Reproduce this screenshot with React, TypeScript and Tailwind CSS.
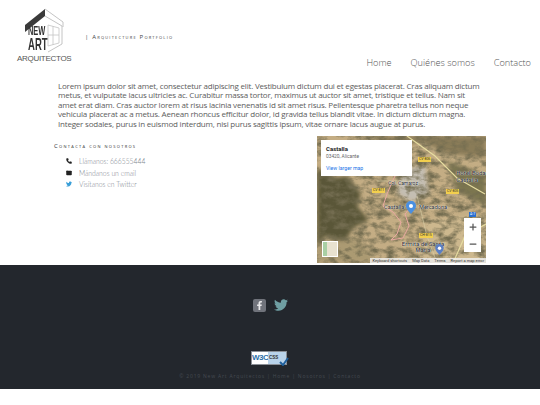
import { Phone, Mail, Plus, Minus } from 'lucide-react';
import { FaFacebookF, FaTwitter } from 'react-icons/fa';

const bodyLines = [
  'Lorem ipsum dolor sit amet, consectetur adipiscing elit. Vestibulum dictum dui et egestas placerat. Cras aliquam dictum',
  'metus, et vulputate lacus ultricies ac. Curabitur massa tortor, maximus ut auctor sit amet, tristique et tellus. Nam sit',
  'amet erat diam. Cras auctor lorem at risus lacinia venenatis id sit amet risus. Pellentesque pharetra tellus non neque',
  'vehicula placerat ac a metus. Aenean rhoncus efficitur dolor, id gravida tellus blandit vitae. In dictum dictum magna.',
  'Integer sodales, purus in euismod interdum, nisi purus sagittis ipsum, vitae ornare lacus augue at purus.',
];

function Logo() {
  return (
    <div className="relative h-[64px] w-[56px]">
      <svg viewBox="0 0 56 64" className="absolute left-0 top-0 h-[64px] w-[56px]">
        <path d="M8 17 L28 1 L28 8 L8 24 Z" fill="#3a3a3a" />
        <path d="M28 1 L46 14 L46 19 M28 8 L45 18 L45 36 L31 44" fill="none" stroke="#b5b5b5" strokeWidth="0.8" />
        <path d="M31 17 L42 20 L42 35 L31 38 Z M36 18 L36 37 M31 27 L42 27" fill="none" stroke="#c4c4c4" strokeWidth="0.8" />
      </svg>
      <div className="absolute left-[11px] top-[18px] origin-left scale-x-[0.62] font-['Liberation_Sans',sans-serif] text-[12px] font-bold leading-[11px] text-[#333]">NEW</div>
      <div className="absolute left-[11px] top-[29px] origin-left scale-x-[0.56] font-['Liberation_Sans',sans-serif] text-[17px] font-bold leading-[15px] text-[#333]">ART</div>
      <div className="absolute left-0 top-[45px] font-['Liberation_Sans',sans-serif] text-[8px] leading-[11px] tracking-[-0.3px] text-[#555]">ARQUITECTOS</div>
    </div>
  );
}

function MapEmbed() {
  const roadLabel = 'absolute bg-[#f2cf4e] px-[1px] text-[3.5px] leading-[5px] text-[#333]';
  const placeLabel = 'absolute text-[#222] [text-shadow:0_0_1px_#fff,0_0_1px_#fff]';
  return (
    <div className="relative h-[127px] w-[169px] overflow-hidden bg-[#9a8d72] font-['Roboto',sans-serif]">
      <svg viewBox="0 0 169 127" className="absolute inset-0 h-full w-full">
        <defs>
          <filter id="grain" x="0" y="0" width="100%" height="100%">
            <feTurbulence type="fractalNoise" baseFrequency="0.1 0.16" numOctaves="5" seed="23" />
            <feColorMatrix values="0 0 0 0 0.17  0 0 0 0 0.15  0 0 0 0 0.08  2.4 0 0 0 -0.9" />
          </filter>
          <filter id="soft" x="-10%" y="-10%" width="120%" height="120%">
            <feGaussianBlur stdDeviation="2" />
          </filter>
        </defs>
        <rect width="169" height="127" fill="#c4ad84" />
        <g filter="url(#soft)">
          <path d="M0 32 L18 42 L30 40 L44 58 L40 70 L52 84 L36 92 L28 106 L8 100 L0 112 Z" fill="#5a5638" />
          <path d="M55 0 L169 0 L169 22 L130 18 L105 6 L70 12 Z" fill="#8a7c58" />
          <path d="M130 25 L169 40 L169 70 L140 55 Z" fill="#7c7650" />
          <path d="M84 35 L108 28 L112 58 L95 66 L80 58 Z" fill="#c4beb2" />
          <path d="M110 85 L169 78 L169 127 L105 127 Z" fill="#cdb88e" />
          <path d="M0 112 L40 100 L60 127 L0 127 Z" fill="#ab9a72" />
        </g>
        <rect width="169" height="127" filter="url(#grain)" />
        <path d="M76 44 L80 36 L92 22 M76 44 L70 58 L66 70 L76 76 L84 86 L80 98 L74 104 L86 102 L92 90 L88 78 L98 66" fill="none" stroke="#e8a8a0" strokeWidth="1" />
        <path d="M90 0 L118 20 L140 42 L168 58 M169 88 L148 100 L136 127" fill="none" stroke="#e6dca0" strokeWidth="1.2" />
        <path d="M100 60 L110 100 L120 127 M60 45 L96 45" fill="none" stroke="#d8d0a8" strokeWidth="0.6" />
      </svg>
      <div className="absolute left-[4px] top-[4px] h-[36px] w-[91px] bg-white px-[5px] pt-[5px]">
        <div className="text-[6px] font-bold leading-[7px] text-[#222]">Castalla</div>
        <div className="mt-[2px] text-[4.8px] leading-[6px] text-[#666]">03420, Alicante</div>
        <div className="mt-[5px] text-[5.2px] leading-[6px] text-[#1a73e8]">View larger map</div>
      </div>
      <span className={`${roadLabel} left-[101px] top-[21px]`}>CV-806</span>
      <span className={`${roadLabel} left-[55px] top-[52px]`}>CV-811</span>
      <span className={`${roadLabel} left-[129px] top-[53px]`}>CV-805</span>
      <span className={`${roadLabel} left-[102px] top-[97px]`}>CH-815</span>
      <span className="absolute left-[152px] top-[76px] bg-[#2a6fd0] px-[1px] text-[3.5px] leading-[5px] text-white">A-7</span>
      <span className={`${placeLabel} left-[71px] top-[44px] text-[5px] leading-[6px]`}>Col. Camaroz</span>
      <span className={`${placeLabel} left-[67px] top-[68px] text-[5.6px] leading-[7px]`}>Castalla</span>
      <span className={`${placeLabel} left-[102px] top-[68px] text-[5.6px] leading-[7px]`}>Mercadona</span>
      <span className={`${placeLabel} left-[139px] top-[33px] w-[32px] text-[6px] leading-[7px]`}>Hotel Boda Castalla</span>
      <span className={`${placeLabel} left-[78px] top-[105px] w-[56px] text-center text-[6px] leading-[6px]`}>Ermita de Santa Maria</span>
      <svg viewBox="0 0 10 13" className="absolute left-[89px] top-[65px] h-[13px] w-[10px]">
        <path d="M5 0 C2 0 0 2 0 5 C0 8 3 10 5 13 C7 10 10 8 10 5 C10 2 8 0 5 0 Z" fill="#4a8fe0" />
        <circle cx="5" cy="5" r="2" fill="#fff" />
      </svg>
      <svg viewBox="0 0 10 13" className="absolute left-[118px] top-[108px] h-[11px] w-[9px]">
        <path d="M5 0 C2 0 0 2 0 5 C0 8 3 10 5 13 C7 10 10 8 10 5 C10 2 8 0 5 0 Z" fill="#5b7fc4" />
        <circle cx="5" cy="5" r="2" fill="#fff" />
      </svg>
      <div className="absolute left-[147px] top-[82px] flex w-[17px] flex-col items-center bg-white text-[#555]">
        <div className="flex h-[17px] items-center justify-center"><Plus size={10} strokeWidth={3} /></div>
        <div className="flex h-[17px] items-center justify-center"><Minus size={10} strokeWidth={3} /></div>
      </div>
      <div className="absolute bottom-[6px] left-[5px] h-[16px] w-[16px] border border-white bg-[#e8e2d0]">
        <div className="h-full w-[4px] bg-[#a9cfa4]" />
      </div>
      <div className="absolute bottom-0 right-0 flex gap-[5px] bg-[#f2f2f2cc] px-[2px] text-[4px] leading-[5px] text-[#333]">
        <span>Keyboard shortcuts</span>
        <span>Map Data</span>
        <span>Terms</span>
        <span>Report a map error</span>
      </div>
    </div>
  );
}

export default function App() {
  return (
    <div className="h-[405px] w-[540px] overflow-hidden bg-white font-['Open_Sans',sans-serif]">
      <header className="flex h-[76px] items-start pl-[17px] pr-[9px] pt-[8px]">
        <Logo />
        <div className="ml-[12px] mt-[25px] flex-1 text-[6px] leading-[8px] tracking-[1.2px] text-[#444] [font-variant:small-caps]">
          | Arquitecture Portfolio
        </div>
        <nav className="mt-[48px] flex gap-[19px] text-[9.2px] font-light leading-[14px] text-[#555]">
          <span>Home</span>
          <span>Quiénes somos</span>
          <span>Contacto</span>
        </nav>
      </header>

      <main className="h-[189px] px-[58px] pt-[5px]">
        <div className="whitespace-nowrap text-[8px] leading-[9.4px] tracking-[-0.2px] text-[#5c5c5c]">
          {bodyLines.map((line) => (
            <p key={line}>{line}</p>
          ))}
        </div>
        <div className="mt-[8px] flex justify-between">
          <div className="-ml-[4px] pt-[6px]">
            <h4 className="text-[6px] leading-[8px] tracking-[1.3px] text-[#333] [font-variant:small-caps]">Contacta con nosotros</h4>
            <ul className="mt-[6px] flex flex-col gap-[1.7px] pl-[12px] font-['Lato',sans-serif] text-[6.8px] font-light leading-[10px] text-[#7d848d]">
              <li className="flex items-center gap-[7px]">
                <Phone size={6} className="fill-[#222] text-[#222]" />
                <span>Llámanos: 666555444</span>
              </li>
              <li className="flex items-center gap-[7px]">
                <Mail size={6} className="fill-[#222] text-[#222]" />
                <span>Mándanos un email</span>
              </li>
              <li className="flex items-center gap-[7px]">
                <FaTwitter size={6} className="text-[#3a9fd8]" />
                <span>Visítanos en Twitter</span>
              </li>
            </ul>
          </div>
          <div className="-mr-[4px]">
            <MapEmbed />
          </div>
        </div>
      </main>

      <footer className="flex h-[124px] flex-col items-center bg-[#23272d]">
        <div className="mt-[33px] flex items-center gap-[8px]">
          <div className="flex h-[13px] w-[13px] items-center justify-center rounded-[2px] bg-[#70737b]">
            <FaFacebookF size={9} className="text-[#e8e8ea]" />
          </div>
          <FaTwitter size={14} className="text-[#6f9fa3]" />
        </div>
        <div className="relative mt-[39px] -ml-[2px] flex h-[14px] w-[36px] items-center border border-[#8a8f96] bg-white">
          <span className="w-[16px] text-center font-['Liberation_Sans',sans-serif] text-[8px] font-bold leading-[10px] tracking-[-0.5px] text-[#2a6fa8]">W3C</span>
          <span className="flex h-full flex-1 items-center bg-[#b9d3ea] pl-[1px] font-['Liberation_Sans',sans-serif] text-[4.5px] font-bold text-[#333]">CSS</span>
          <svg viewBox="0 0 10 9" className="absolute -right-[3px] bottom-[-2px] h-[9px] w-[10px]">
            <path d="M1 5 L4 8 L9 1" fill="none" stroke="#1f5f9c" strokeWidth="2" />
          </svg>
        </div>
        <div className="mt-[7px] text-[5px] leading-[8px] tracking-[0.8px] text-[#454a51]">
          © 2019 New Art Arquitectos | Home | Nosotros | Contacto
        </div>
      </footer>
    </div>
  );
}
